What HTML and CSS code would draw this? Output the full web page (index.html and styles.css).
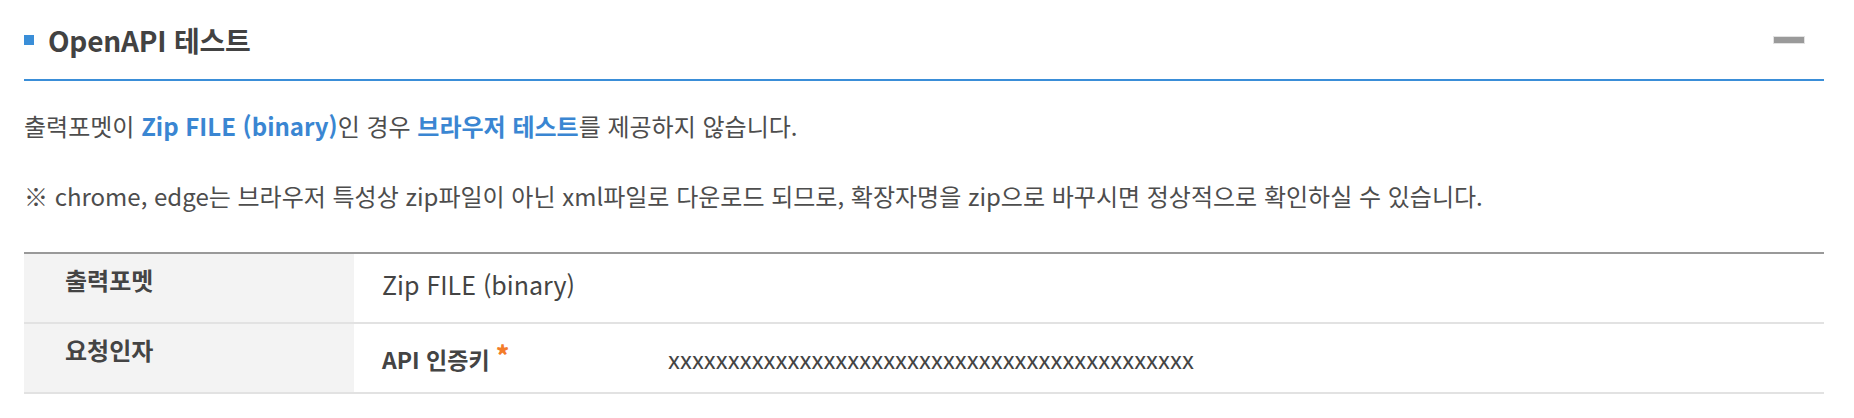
FILE: index.html
```html
<!DOCTYPE html>
<html lang="ko">
<head>
<meta charset="utf-8">
<title>OpenAPI 테스트</title>
<link rel="stylesheet" href="styles.css">
</head>
<body>
<section class="panel">
  <header class="panel-head">
    <h2 class="panel-title"><span class="bullet"></span>OpenAPI 테스트</h2>
    <button class="collapse" type="button" aria-label="접기"><span class="bar"></span></button>
  </header>
  <div class="panel-body">
    <p class="notice">출력포멧이 <strong class="hl">Zip FILE (binary)</strong>인 경우 <strong class="hl">브라우저 테스트</strong>를 제공하지 않습니다.</p>
    <p class="notice note2">※ chrome, edge는 브라우저 특성상 zip파일이 아닌 xml파일로 다운로드 되므로, 확장자명을 zip으로 바꾸시면 정상적으로 확인하실 수 있습니다.</p>
    <div class="spec">
      <div class="row">
        <div class="th">출력포멧</div>
        <div class="td"><span class="fmt">Zip FILE (binary)</span></div>
      </div>
      <div class="row">
        <div class="th">요청인자</div>
        <div class="td">
          <div class="param">
            <span class="pname">API 인증키 <em class="req">*</em></span>
            <span class="pval">xxxxxxxxxxxxxxxxxxxxxxxxxxxxxxxxxxxxxxxxxxxx</span>
          </div>
        </div>
      </div>
    </div>
  </div>
</section>
</body>
</html>
```

FILE: styles.css
```css
* { box-sizing: border-box; }
html, body { margin: 0; padding: 0; background: #fff; }
body {
  font-family: "Noto Sans CJK KR", "Noto Sans", sans-serif;
  color: #444;
}
.panel { padding: 0 30px 0 24px; }
.panel-head {
  height: 81px;
  display: flex;
  align-items: center;
  justify-content: space-between;
  border-bottom: 2px solid #3a8ed8;
}
.panel-title {
  margin: 0;
  display: flex;
  align-items: center;
  font-size: 28px;
  line-height: 40px;
  font-weight: 700;
  color: #424242;
  letter-spacing: -0.2px;
}
.bullet {
  width: 10px; height: 10px;
  background: #3a8ed8;
  margin-right: 14px;
}
.collapse {
  border: 0; background: transparent; padding: 0;
  width: 30px; height: 8px;
  margin-right: 20px;
  display: flex; align-items: center;
}
.collapse .bar {
  display: block; width: 30px; height: 6px;
  background: #9a9a9a;
  box-shadow: 0 0 0 1px #e2e2e2;
}
.panel-body { padding-top: 27px; }
.notice {
  margin: 0;
  font-size: 24px;
  line-height: 36px;
  color: #4d4d4d;
}
.notice .hl { color: #3a86d2; font-weight: 700; }
.note2 { margin-top: 34px; }
.spec {
  margin-top: 38px;
  border-top: 2px solid #999;
}
.row {
  display: flex;
  border-bottom: 2px solid #e2e2e2;
  min-height: 70px;
}
.th {
  width: 330px;
  flex: none;
  background: #f3f3f3;
  padding: 8px 0 0 41px;
  font-size: 24px;
  line-height: 36px;
  font-weight: 700;
  color: #444;
}
.td {
  flex: 1;
  padding: 12px 0 0 28px;
  font-size: 24px;
  line-height: 36px;
  color: #444;
}
.fmt { font-size: 25px; }
.param { display: flex; align-items: baseline; }
.pname { width: 286px; flex: none; font-weight: 700; font-size: 23px; }
.req { color: #f37c2a; font-style: normal; font-weight: 900; vertical-align: 4px; font-size: 25px; }
.pval { font-size: 24px; }
```
